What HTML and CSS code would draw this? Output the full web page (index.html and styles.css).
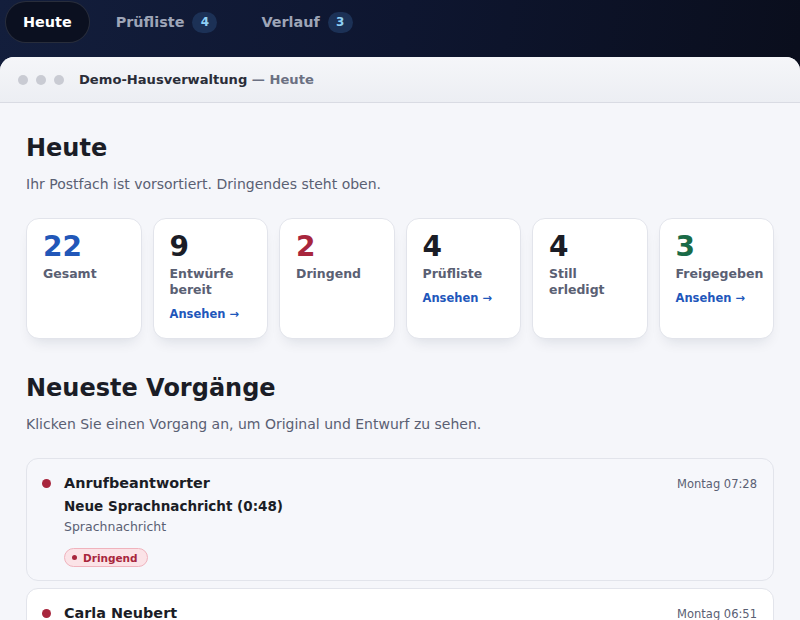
FILE: index.html
```html
<!DOCTYPE html>
<html lang="de">
<head>
<meta charset="utf-8">
<title>Demo-Hausverwaltung</title>
<link rel="stylesheet" href="styles.css">
</head>
<body>
<nav class="topnav">
  <a class="tab active">Heute</a>
  <a class="tab">Prüfliste <span class="count">4</span></a>
  <a class="tab">Verlauf <span class="count">3</span></a>
</nav>
<div class="window">
  <div class="titlebar">
    <span class="dots"><i></i><i></i><i></i></span>
    <span class="wtitle">Demo-Hausverwaltung <span class="sub">— Heute</span></span>
  </div>
  <main class="content">
    <h1>Heute</h1>
    <p class="lead">Ihr Postfach ist vorsortiert. Dringendes steht oben.</p>
    <div class="stats">
      <div class="stat"><div class="num blue">22</div><div class="label">Gesamt</div></div>
      <div class="stat"><div class="num">9</div><div class="label">Entwürfe bereit</div><a class="more">Ansehen →</a></div>
      <div class="stat"><div class="num red">2</div><div class="label">Dringend</div></div>
      <div class="stat"><div class="num">4</div><div class="label">Prüfliste</div><a class="more">Ansehen →</a></div>
      <div class="stat"><div class="num">4</div><div class="label">Still erledigt</div></div>
      <div class="stat"><div class="num green">3</div><div class="label">Freigegeben</div><a class="more">Ansehen →</a></div>
    </div>
    <h2>Neueste Vorgänge</h2>
    <p class="lead">Klicken Sie einen Vorgang an, um Original und Entwurf zu sehen.</p>
    <div class="list">
      <div class="item first">
        <span class="dot"></span>
        <div class="body">
          <div class="head"><span class="from">Anrufbeantworter</span><span class="time">Montag 07:28</span></div>
          <div class="subject">Neue Sprachnachricht (0:48)</div>
          <div class="kind">Sprachnachricht</div>
          <span class="badge"><i></i>Dringend</span>
        </div>
      </div>
      <div class="item">
        <span class="dot"></span>
        <div class="body">
          <div class="head"><span class="from">Carla Neubert</span><span class="time">Montag 06:51</span></div>
        </div>
      </div>
    </div>
  </main>
</div>
</body>
</html>
```
FILE: styles.css
```css
* { box-sizing: border-box; }
html, body { margin: 0; height: 100%; overflow: hidden; }
body {
  font-family: "DejaVu Sans", "Liberation Sans", sans-serif;
  background: linear-gradient(100deg, #131e3c 0%, #0e1630 45%, #090c18 100%);
  color: #1b1d26;
}
.topnav {
  display: flex;
  align-items: flex-start;
  gap: 8px;
  padding: 1px 5px 0;
  height: 57px;
}
.tab {
  display: flex;
  align-items: center;
  gap: 8px;
  height: 42px;
  padding: 0 17px;
  border-radius: 21px;
  font-size: 14.4px;
  font-weight: bold;
  color: #9ea5b7;
  border: 1px solid transparent;
}
.tab.active {
  color: #ffffff;
  background: #0b1020;
  border-color: rgba(255,255,255,0.12);
}
.count {
  display: inline-flex;
  align-items: center;
  justify-content: center;
  min-width: 25px;
  height: 21px;
  padding: 0 7px;
  border-radius: 11px;
  background: #1c3156;
  color: #8fd0f5;
  font-size: 12px;
  font-weight: bold;
}
.window {
  background: #f5f6fa;
  border-radius: 14px 14px 0 0;
  height: 563px;
  overflow: hidden;
}
.titlebar {
  height: 46px;
  display: flex;
  align-items: center;
  padding-left: 18px;
  gap: 15px;
  background: linear-gradient(#f5f6f9, #eceef3);
  border-bottom: 1px solid #d9dbe3;
}
.dots { display: flex; gap: 8px; }
.dots i {
  width: 10px; height: 10px; border-radius: 50%;
  background: #c9cbd3; display: block;
}
.wtitle { font-size: 13.1px; font-weight: bold; color: #2a2d38; }
.wtitle .sub { color: #6b7082; }
.content { padding: 29px 26px 0; }
h1, h2 {
  margin: 0;
  font-size: 24px;
  font-weight: bold;
  color: #1b1d26;
  line-height: 32px;
}
.lead {
  margin: 10px 0 0;
  font-size: 14px;
  color: #5a6073;
  line-height: 20px;
}
.stats {
  display: grid;
  grid-template-columns: repeat(6, minmax(0, 1fr));
  gap: 11px;
  margin-top: 24px;
}
.stat {
  background: #fff;
  border: 1px solid #e2e4eb;
  border-radius: 13px;
  height: 121px;
  padding: 12px 16px;
  box-shadow: 0 8px 14px -6px rgba(20, 30, 60, 0.12);
}
.num {
  font-size: 28px;
  font-weight: bold;
  line-height: 32px;
  color: #1b1d26;
}
.num.blue { color: #2257b8; }
.num.red { color: #a8263d; }
.num.green { color: #1a6b47; }
.label {
  margin-top: 3px;
  font-size: 12.5px;
  font-weight: bold;
  color: #5a6073;
  line-height: 16px;
}
.more {
  display: block;
  margin-top: 9px;
  font-size: 11.5px;
  font-weight: bold;
  color: #1f57bb;
}
h2 { margin-top: 33px; }
.lead + .list { margin-top: 24px; }
.list { display: flex; flex-direction: column; gap: 7px; }
.item {
  display: flex;
  gap: 13px;
  padding: 15px 16px 13px 15px;
  border: 1px solid #e2e4eb;
  border-radius: 12px;
  background: #fff;
}
.item.first { background: #f6f7fb; }
.dot {
  flex: none;
  width: 9px; height: 9px; border-radius: 50%;
  background: #a8263d;
  margin-top: 5px;
}
.body { flex: 1; }
.head { display: flex; justify-content: space-between; align-items: baseline; line-height: 18px; }
.from { font-size: 14.4px; font-weight: bold; color: #1b1d26; }
.time { font-size: 11.5px; color: #5a6073; }
.subject { margin-top: 4px; font-size: 13.5px; font-weight: bold; color: #1b1d26; line-height: 18px; }
.kind { margin-top: 3px; font-size: 12.5px; color: #5a6073; line-height: 18px; }
.badge {
  display: inline-flex;
  align-items: center;
  gap: 6px;
  margin-top: 12px;
  height: 19px;
  padding: 0 9px 0 7px;
  border-radius: 10px;
  background: #fbe3e7;
  border: 1px solid #f0b3bd;
  color: #a8263d;
  font-size: 10.5px;
  font-weight: bold;
}
.badge i { width: 5px; height: 5px; border-radius: 50%; background: #a8263d; display: block; }
```
